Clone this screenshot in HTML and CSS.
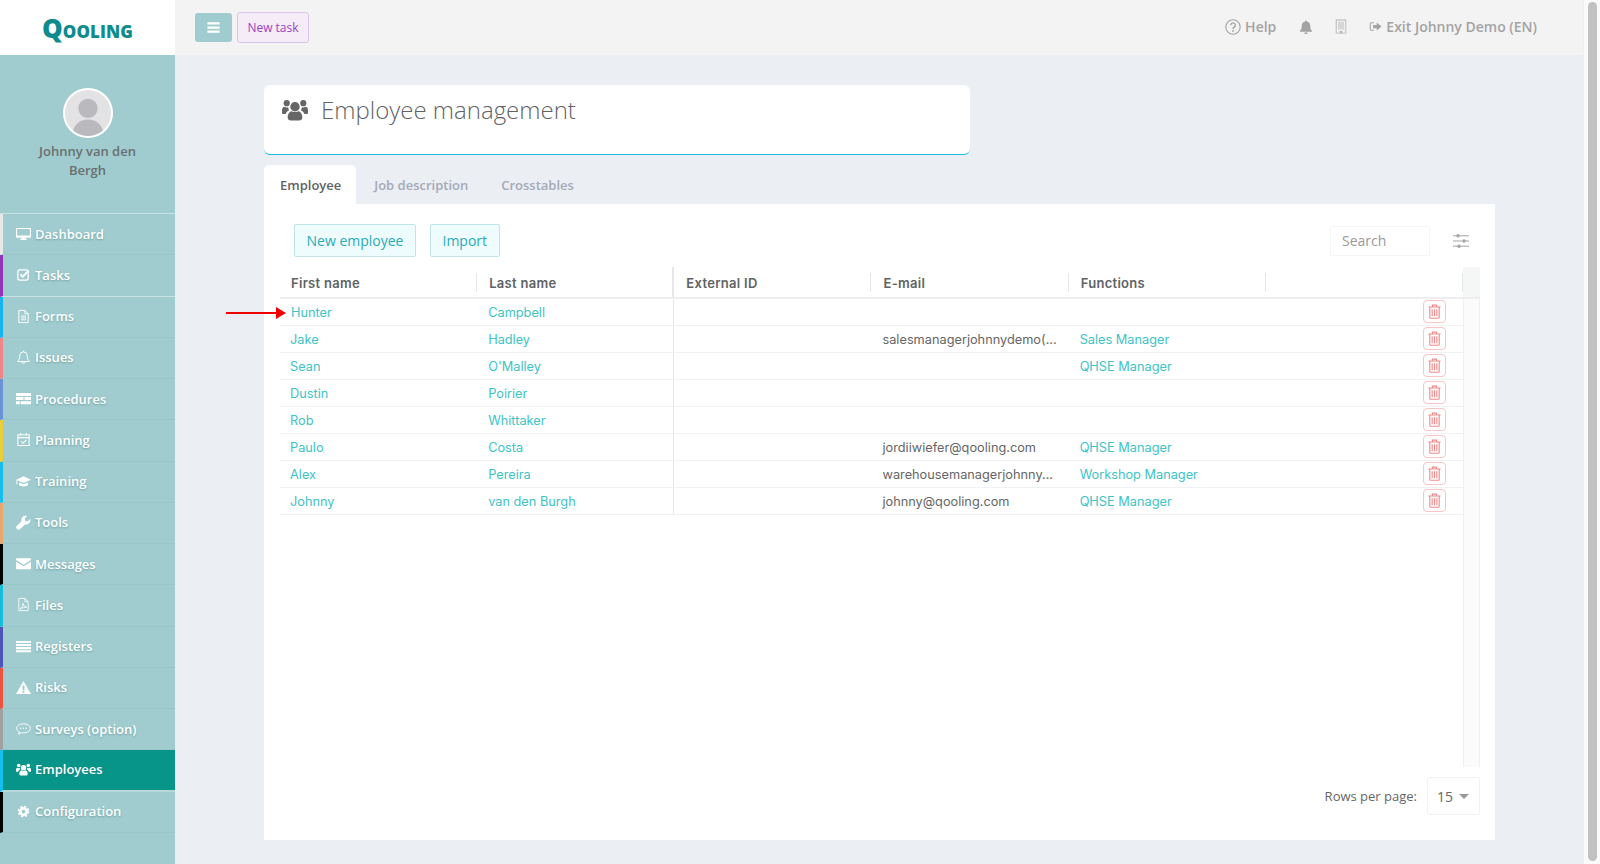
FILE: index.html
```html
<!DOCTYPE html>
<html lang="en">
<head>
<meta charset="utf-8">
<title>Employee management</title>
<link rel="stylesheet" href="styles.css">
</head>
<body>
<svg class="sprite" width="0" height="0" aria-hidden="true">
  <symbol id="i-desktop" viewBox="0 0 16 16"><path fill-rule="evenodd" d="M1 2h14a1 1 0 0 1 1 1v8.500a1 1 0 0 1-1 1h-5l.4 1.300h1.100V15h-7v-1.200h1.100l.4-1.300H1a1 1 0 0 1-1-1V3a1 1 0 0 1 1-1zm.2 1.200V10h13.600V3.200z"/></symbol>
  <symbol id="i-check" viewBox="0 0 16 16"><rect x="2" y="3" width="11" height="11" rx="2" fill="none" stroke="currentColor" stroke-width="1.400"/><path d="M4.800 8l2.400 2.400 6.300-6.600" fill="none" stroke="currentColor" stroke-width="2"/></symbol>
  <symbol id="i-file" viewBox="0 0 16 16"><path d="M3 1.500h6.500l3.500 3.500v9.500H3zM9.500 1.500V5H13M5.200 7.500h5.600M5.200 9.500h5.600M5.200 11.500h5.600" fill="none" stroke="currentColor"/></symbol>
  <symbol id="i-bell-o" viewBox="0 0 16 16"><path d="M8 2a4 4 0 0 0-4 4c0 4-1.300 5-2.200 6.300h12.400C13.300 11 12 10 12 6a4 4 0 0 0-4-4zM6.500 12.800a1.500 1.500 0 0 0 3 0M8 .8V2" fill="none" stroke="currentColor"/></symbol>
  <symbol id="i-proc" viewBox="0 0 16 16"><path d="M0 2h16v3.300H0zM0 6.400h8v3.300H0zM9 6.400h7v3.300H9zM0 10.800h4v3.300H0zM5 10.800h11v3.300H5z"/></symbol>
  <symbol id="i-cal" viewBox="0 0 16 16"><path d="M2 3h12v11.500H2zM2 6h12M5 1v3M11 1v3M5.500 10l2 2 3.500-3.500" fill="none" stroke="currentColor" stroke-width="1.100"/></symbol>
  <symbol id="i-cap" viewBox="0 0 16 16"><g transform="matrix(-1 0 0 1 16 0)"><path d="M8 2.500L0 6l8 3.500L14.600 6.600V11h1V6zM3.300 9v3c1.700 1.600 7.700 1.600 9.400 0V9L8 11z"/></g></symbol>
  <symbol id="i-wrench" viewBox="0 0 16 16"><path d="M15 4.200l-2.600 2.600-2.600-.6-.6-2.600L11.800 1A4.500 4.500 0 0 0 6 6.500L1 11.500A2.400 2.400 0 0 0 4.500 15l5-5A4.500 4.500 0 0 0 15 4.200z"/></symbol>
  <symbol id="i-mail" viewBox="0 0 16 16"><path d="M0 3.500a1 1 0 0 1 1-1h14a1 1 0 0 1 1 1v.8L8 9.200 0 4.300zM0 6l8 5 8-5v7a1 1 0 0 1-1 1H1a1 1 0 0 1-1-1z"/></symbol>
  <symbol id="i-pdf" viewBox="0 0 16 16"><path d="M3 1.500h6.500l3.500 3.500v9.500H3zM9.500 1.500V5H13M4.500 12.800c2-1 3-4 3-6.300 0 2.500 2 4.300 4 4.300-2.500 0-5 .8-7 2z" fill="none" stroke="currentColor" stroke-width=".9"/></symbol>
  <symbol id="i-list" viewBox="0 0 16 16"><path d="M0 2h16v2.200H0zM0 5.300h16v2.200H0zM0 8.600h16v2.200H0zM0 11.900h16v2.200H0z"/></symbol>
  <symbol id="i-warn" viewBox="0 0 16 16"><path fill-rule="evenodd" d="M8 1l8 14H0zM7 5.800v5h2v-5zM7 11.700v2h2v-2z"/></symbol>
  <symbol id="i-chat" viewBox="0 0 16 16"><path d="M8 3c4 0 7.300 2 7.300 4.800S12 12.600 8 12.600c-.8 0-1.500 0-2.200-.2-.9.8-2 1.400-3.500 1.600.8-.8 1.200-1.500 1.300-2.500C1.900 10.600.7 9.300.7 7.800.7 5 4 3 8 3z" fill="none" stroke="currentColor"/><circle cx="5" cy="7.800" r=".8"/><circle cx="8" cy="7.800" r=".8"/><circle cx="11" cy="7.800" r=".8"/></symbol>
  <symbol id="i-users" viewBox="0 0 16 16"><circle cx="8" cy="6" r="2.900"/><circle cx="2.900" cy="3.800" r="1.900"/><circle cx="13.100" cy="3.800" r="1.900"/><path d="M3.500 12.500c0-2.500 1.500-3.800 2.500-3.800.6.400 1.200.6 2 .6s1.400-.2 2-.6c1 0 2.500 1.300 2.500 3.800 0 1.300-.8 2-2 2H5.500c-1.200 0-2-.7-2-2zM0 8.300C0 7 .6 6 1.500 6c.4.300.9.500 1.400.5s.7 0 1-.1c-.1.700.2 1.400.6 1.800-1.100.4-1.900 1.100-2.300 2.300H1c-.7 0-1-.4-1-1zM16 8.300C16 7 15.400 6 14.500 6c-.4.300-.9.500-1.400.5s-.7 0-1-.1c.1.700-.2 1.400-.6 1.800 1.100.4 1.900 1.100 2.300 2.300H15c.7 0 1-.4 1-1z"/></symbol>
  <symbol id="i-cog" viewBox="0 0 16 16"><circle cx="8" cy="8" r="3.400" fill="none" stroke="currentColor" stroke-width="2.800"/><circle cx="8" cy="8" r="5.200" fill="none" stroke="currentColor" stroke-width="2" stroke-dasharray="2.200 1.884"/></symbol>
  <symbol id="i-bars" viewBox="0 0 16 16"><path d="M1.500 2.500h13v2.400h-13zM1.500 6.800h13v2.400h-13zM1.500 11.100h13v2.400h-13z"/></symbol>
  <symbol id="i-help" viewBox="0 0 16 16"><circle cx="8" cy="8" r="7.200" fill="none" stroke="currentColor" stroke-width="1.100"/><path d="M5.700 6.200a2.300 2.300 0 1 1 3.500 2c-.8.500-1.200.9-1.200 1.900" fill="none" stroke="currentColor" stroke-width="1.400"/><circle cx="8" cy="12" r=".9"/></symbol>
  <symbol id="i-bell" viewBox="0 0 16 16"><path d="M8 .5a1 1 0 0 1 1 1.100c2.300.4 3.800 2.300 3.800 4.600 0 3.600.7 5 2.200 6.300v.9H1v-.9c1.500-1.300 2.200-2.700 2.200-6.300 0-2.300 1.500-4.200 3.800-4.600A1 1 0 0 1 8 .5zM6 14.200h4a2 2 0 0 1-4 0z"/></symbol>
  <symbol id="i-building" viewBox="0 0 16 16"><path fill-rule="evenodd" d="M2 0h12v16H2zM3 1v14h3.500v-2h3v2H13V1z"/><path opacity=".45" d="M4.500 2.500h7v9h-7z"/></symbol>
  <symbol id="i-exit" viewBox="0 0 16 16"><path d="M6 3.500H3a1.500 1.500 0 0 0-1.500 1.500v6A1.500 1.500 0 0 0 3 12.500h3" fill="none" stroke="currentColor" stroke-width="1.300"/><path d="M9.500 3l6 5-6 5v-3H5V6h4.500z"/></symbol>
  <symbol id="i-sliders" viewBox="0 0 16 16"><path d="M0 2.800h16M0 8h16M0 13.200h16" stroke="currentColor" fill="none"/><circle cx="5" cy="2.800" r="1.700"/><circle cx="11" cy="8" r="1.700"/><circle cx="6" cy="13.200" r="1.700"/></symbol>
  <symbol id="i-trash" viewBox="0 0 16 16"><path d="M1.500 3.200h13M5.800 3.200V1.200h4.400v2M3 3.200V14.200a1 1 0 0 0 1 1h8a1 1 0 0 0 1-1V3.200M5.500 5.500v7.500M8 5.500v7.500M10.500 5.500v7.500" fill="none" stroke="currentColor" stroke-width="1.200"/></symbol>
</svg>

<div class="app">
  <aside class="sidebar">
    <div class="logo"><span class="logo-text"><span class="logo-q">Q</span>ooling</span></div>
    <div class="profile">
      <div class="avatar">
        <svg viewBox="0 0 50 50" class="avatar-img"><circle cx="25" cy="20" r="10.500"/><path d="M8 50c0-12 8-18 17-18s17 6 17 18z"/></svg>
      </div>
      <div class="profile-name">Johnny van den Bergh</div>
    </div>
    <nav class="menu">
      <a class="item c-white"><svg class="item-icon"><use href="#i-desktop"/></svg>Dashboard</a>
      <a class="item c-purple item-light"><svg class="item-icon"><use href="#i-check"/></svg>Tasks</a>
      <a class="item c-sky"><svg class="item-icon"><use href="#i-file"/></svg>Forms</a>
      <a class="item c-salmon"><svg class="item-icon"><use href="#i-bell-o"/></svg>Issues</a>
      <a class="item c-blue"><svg class="item-icon"><use href="#i-proc"/></svg>Procedures</a>
      <a class="item c-yellow"><svg class="item-icon"><use href="#i-cal"/></svg>Planning</a>
      <a class="item c-cyan"><svg class="item-icon"><use href="#i-cap"/></svg>Training</a>
      <a class="item c-orange"><svg class="item-icon"><use href="#i-wrench"/></svg>Tools</a>
      <a class="item c-black"><svg class="item-icon"><use href="#i-mail"/></svg>Messages</a>
      <a class="item c-teal"><svg class="item-icon"><use href="#i-pdf"/></svg>Files</a>
      <a class="item c-indigo"><svg class="item-icon"><use href="#i-list"/></svg>Registers</a>
      <a class="item c-red"><svg class="item-icon"><use href="#i-warn"/></svg>Risks</a>
      <a class="item c-gray"><svg class="item-icon"><use href="#i-chat"/></svg>Surveys (option)</a>
      <a class="item c-cyan item-active"><svg class="item-icon"><use href="#i-users"/></svg>Employees</a>
      <a class="item c-black"><svg class="item-icon"><use href="#i-cog"/></svg>Configuration</a>
    </nav>
  </aside>

  <div class="main">
    <header class="topbar">
      <button class="menu-btn"><svg class="menu-btn-icon"><use href="#i-bars"/></svg></button>
      <button class="task-btn">New task</button>
      <div class="top-actions">
        <span class="top-link"><svg class="top-icon top-icon-help"><use href="#i-help"/></svg>Help</span>
        <svg class="top-icon top-icon-bell"><use href="#i-bell"/></svg>
        <svg class="top-icon top-icon-building"><use href="#i-building"/></svg>
        <span class="top-link"><svg class="top-icon top-icon-exit"><use href="#i-exit"/></svg>Exit Johnny Demo (EN)</span>
      </div>
    </header>

    <main class="content">
      <section class="title-card">
        <svg class="title-icon"><use href="#i-users"/></svg>
        <h1 class="title">Employee management</h1>
      </section>

      <div class="tabs">
        <span class="tab tab-active">Employee</span>
        <span class="tab">Job description</span>
        <span class="tab">Crosstables</span>
      </div>

      <section class="panel">
        <div class="toolbar">
          <button class="btn">New employee</button>
          <button class="btn">Import</button>
          <div class="search">Search</div>
          <svg class="sliders"><use href="#i-sliders"/></svg>
        </div>

        <div class="grid-wrap">
          <div class="grid">
            <div class="row head">
              <div class="cell">First name</div><div class="cell cell-frozen">Last name</div><div class="cell">External ID</div><div class="cell">E-mail</div><div class="cell">Functions</div><div class="cell"></div>
            </div>
            <div class="row">
              <svg class="pointer" viewBox="0 0 60 12"><path d="M0 5h50V0l10 6-10 6V7H0z"/></svg>
              <div class="cell link">Hunter</div><div class="cell cell-frozen link">Campbell</div><div class="cell"></div><div class="cell"></div><div class="cell"></div><div class="cell cell-action"><span class="del"><svg class="del-icon"><use href="#i-trash"/></svg></span></div>
            </div>
            <div class="row">
              <div class="cell link">Jake</div><div class="cell cell-frozen link">Hadley</div><div class="cell"></div><div class="cell">salesmanagerjohnnydemo(...</div><div class="cell link">Sales Manager</div><div class="cell cell-action"><span class="del"><svg class="del-icon"><use href="#i-trash"/></svg></span></div>
            </div>
            <div class="row">
              <div class="cell link">Sean</div><div class="cell cell-frozen link">O'Malley</div><div class="cell"></div><div class="cell"></div><div class="cell link">QHSE Manager</div><div class="cell cell-action"><span class="del"><svg class="del-icon"><use href="#i-trash"/></svg></span></div>
            </div>
            <div class="row">
              <div class="cell link">Dustin</div><div class="cell cell-frozen link">Poirier</div><div class="cell"></div><div class="cell"></div><div class="cell"></div><div class="cell cell-action"><span class="del"><svg class="del-icon"><use href="#i-trash"/></svg></span></div>
            </div>
            <div class="row">
              <div class="cell link">Rob</div><div class="cell cell-frozen link">Whittaker</div><div class="cell"></div><div class="cell"></div><div class="cell"></div><div class="cell cell-action"><span class="del"><svg class="del-icon"><use href="#i-trash"/></svg></span></div>
            </div>
            <div class="row">
              <div class="cell link">Paulo</div><div class="cell cell-frozen link">Costa</div><div class="cell"></div><div class="cell">jordiiwiefer@qooling.com</div><div class="cell link">QHSE Manager</div><div class="cell cell-action"><span class="del"><svg class="del-icon"><use href="#i-trash"/></svg></span></div>
            </div>
            <div class="row">
              <div class="cell link">Alex</div><div class="cell cell-frozen link">Pereira</div><div class="cell"></div><div class="cell">warehousemanagerjohnny...</div><div class="cell link">Workshop Manager</div><div class="cell cell-action"><span class="del"><svg class="del-icon"><use href="#i-trash"/></svg></span></div>
            </div>
            <div class="row">
              <div class="cell link">Johnny</div><div class="cell cell-frozen link">van den Burgh</div><div class="cell"></div><div class="cell">johnny@qooling.com</div><div class="cell link">QHSE Manager</div><div class="cell cell-action"><span class="del"><svg class="del-icon"><use href="#i-trash"/></svg></span></div>
            </div>
          </div>
          <div class="grid-scroll"><div class="grid-scroll-head"></div><div class="grid-scroll-body"></div></div>
        </div>

        <div class="pager">
          <span class="pager-label">Rows per page:</span>
          <div class="pager-select">15<span class="caret"></span></div>
        </div>
      </section>
    </main>
  </div>

  <div class="scrollbar"><div class="scrollbar-thumb"></div></div>
</div>
</body>
</html>
```
FILE: styles.css
```css
* { box-sizing: border-box; }
html, body { margin: 0; padding: 0; height: 100%; overflow: hidden; }
body { font-family: "Open Sans", "Liberation Sans", sans-serif; color: #666; background: #ebeef3; }
.sprite { position: absolute; }
svg { fill: currentColor; display: block; }

.app { display: flex; width: 1600px; height: 864px; }

/* Sidebar */
.sidebar { width: 175px; flex: none; background: #a0cccf; display: flex; flex-direction: column; }
.logo { height: 55px; background: #fff; display: flex; align-items: center; justify-content: center; flex: none; }
.logo-text { font-family: "Open Sans", sans-serif; font-weight: 800; font-size: 24px; font-variant: small-caps; color: #0e8b8d; letter-spacing: .1px; line-height: 1; }
.logo-q { font-size: 26px; }
.profile { height: 158px; flex: none; display: flex; flex-direction: column; align-items: center; padding-top: 33px; }
.avatar { width: 50px; height: 50px; border-radius: 50%; border: 2px solid #fff; background: #e3e3e6; overflow: hidden; }
.avatar-img { width: 100%; height: 100%; fill: #b9b9be; }
.profile-name { margin-top: 4px; width: 110px; text-align: center; font-size: 13px; line-height: 19px; font-weight: 600; color: #6a6f70; }
.menu { display: flex; flex-direction: column; border-top: 1px solid #c8e3e4; }
.item { height: 41.25px; flex: none; display: flex; align-items: center; gap: 4px; padding: 0 0 1px 13px; border-left: 3px solid #000; border-bottom: 1px solid #98c6c9; font-size: 13px; font-weight: 600; color: #fff; text-shadow: 0 1px 2px rgba(60,110,115,.45); }
.item-icon { width: 15px; height: 15px; flex: none; }
.item-light { border-bottom-color: #c8e3e4; }
.item-active { background: #07958a; border-bottom: 2px solid #b7d8da; }
.c-white { border-left-color: #e8e8e8; }
.c-purple { border-left-color: #9234b8; }
.c-sky { border-left-color: #18b4f2; }
.c-salmon { border-left-color: #f08587; }
.c-blue { border-left-color: #6a93d6; }
.c-yellow { border-left-color: #e8cf3a; }
.c-cyan { border-left-color: #14bff0; }
.c-orange { border-left-color: #e9a66d; }
.c-black { border-left-color: #000; }
.c-teal { border-left-color: #15bdd8; }
.c-indigo { border-left-color: #4d55b8; }
.c-red { border-left-color: #f0523f; }
.c-gray { border-left-color: #a0a0a0; }

/* Main column */
.main { flex: 1; min-width: 0; display: flex; flex-direction: column; }
.topbar { height: 55px; flex: none; background: #f3f3f4; display: flex; align-items: center; padding-left: 20px; }
.menu-btn { width: 37px; height: 29px; padding: 0; border: 0; border-radius: 3px; background: #a0cccf; color: #fff; display: flex; align-items: center; justify-content: center; }
.menu-btn-icon { width: 15px; height: 15px; }
.task-btn { margin-left: 5px; width: 72px; height: 31px; padding: 0; border: 1px solid #dcc4e9; border-radius: 3px; background: #f5ecf8; color: #9b40c2; font: 400 12px "Open Sans", sans-serif; }
.top-actions { margin-left: auto; margin-right: 46px; margin-bottom: 2px; display: flex; align-items: center; color: #a3a3a3; }
.top-link { display: flex; align-items: center; font-size: 14px; font-weight: 600; }
.top-icon { flex: none; }
.top-icon-help { width: 16px; height: 16px; margin-right: 4px; }
.top-icon-bell { width: 14px; height: 14px; margin-left: 23px; }
.top-icon-building { width: 14px; height: 15px; margin-left: 21px; color: #b3b3b3; }
.top-icon-exit { width: 13px; height: 13px; margin-left: 21px; margin-right: 4px; }

.content { flex: 1; padding: 30px 0 0 89px; min-height: 0; }
.title-card { width: 706px; height: 70px; background: #fff; border-radius: 6px; border-bottom: 1px solid #1cb9e4; padding: 11px 18px 0; display: flex; align-items: flex-start; gap: 13px; }
.title-icon { width: 26px; height: 26px; color: #666; margin-top: 1px; flex: none; }
.title { margin: 0; font-size: 24px; font-weight: 300; line-height: 28px; color: #5f6366; }

.tabs { display: flex; margin-top: 10px; height: 39px; }
.tab { padding: 0 16px; display: flex; align-items: center; font-size: 13px; font-weight: 600; color: #a4aab8; }
.tab:last-child { margin-left: 1px; }
.tab-active { background: #fff; color: #5f6366; border-radius: 5px 5px 0 0; padding-right: 15px; margin-right: 2px; }

.panel { width: 1231px; height: 636px; background: #fff; padding: 20px 15px 0 16px; }
.toolbar { display: flex; align-items: center; height: 33px; padding-left: 14px; }
.btn { height: 33px; padding: 0 11.5px; margin-right: 14px; border: 1px solid #bee6e8; border-radius: 2px; background: #effcfd; color: #28abb5; font: 400 14px "Open Sans", sans-serif; }
.search { margin-left: auto; width: 100px; height: 30px; border: 1px solid #f6f6f6; padding-left: 11px; font-size: 14px; line-height: 28px; color: #999; }
.sliders { width: 16px; height: 16px; margin-left: 23px; margin-right: 11px; color: #a5a5a5; }

.grid-wrap { display: flex; margin-top: 10px; height: 500px; }
.grid { width: 1183px; flex: none; align-self: flex-start; font-family: Inter, "Liberation Sans", sans-serif; font-size: 12.75px; }
.row { position: relative; display: grid; grid-template-columns: repeat(6, 197.17px); height: 27px; border-bottom: 1px solid #f0f1f3; color: #666; }
.head { height: 32px; border-bottom: 2px solid #eceeef; font-size: 13px; letter-spacing: .3px; font-weight: 600; color: #5f6366; }
.cell { padding: 1px 0 0 10px; display: flex; align-items: center; white-space: nowrap; overflow: hidden; }
.head .cell { position: relative; padding-top: 2px; }
.head .cell::after { content: ""; position: absolute; right: 0; top: 6px; height: 19px; width: 1px; background: #e6e7e9; }
.head .cell-frozen::after { top: 0; height: 30px; }
.cell:nth-child(n+2) { padding-left: 11px; }
.head .cell:first-child { padding-left: 11px; }
.head .cell:nth-child(n+2) { padding-left: 12px; }
.cell-frozen { border-right: 1px solid #e6e7ea; }
.link { color: #3ec3c7; }
.row .cell-action { padding: 0 17px 2px 0; justify-content: flex-end; overflow: visible; }
.del { width: 23px; height: 23px; border: 1px solid #f8c6c6; border-radius: 4px; display: flex; align-items: center; justify-content: center; color: #f08a8a; background: #fff; }
.del-icon { width: 15px; height: 15px; }
.pointer { position: absolute; left: -54px; top: 8px; width: 60px; height: 12px; color: #f00000; }

.grid-scroll { width: 17px; flex: none; display: flex; flex-direction: column; }
.grid-scroll-head { height: 32px; background: #f5f6f6; border-bottom: 2px solid #eceeef; }
.grid-scroll-body { flex: 1; background: #fbfbfb; border-left: 1px solid #f0f0f0; border-right: 1px solid #f0f0f0; }

.pager { display: flex; align-items: center; justify-content: flex-end; margin-top: 10px; }
.pager-label { font-size: 13px; color: #666; margin-right: 10px; }
.pager-select { width: 53px; height: 38px; border: 1px solid #f2f2f2; border-radius: 2px; display: flex; align-items: center; padding-left: 9px; font-size: 14px; color: #666; gap: 6px; }
.caret { width: 0; height: 0; border-left: 5px solid transparent; border-right: 5px solid transparent; border-top: 5px solid #999; }

.scrollbar { width: 17px; flex: none; background: #fafafa; border-left: 1px solid #eeeeee; padding: 2px 3px 3px 4px; }
.scrollbar-thumb { height: 100%; background: #c1c1c1; border-radius: 5px; }
```
